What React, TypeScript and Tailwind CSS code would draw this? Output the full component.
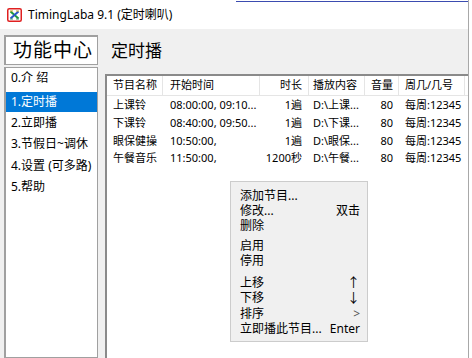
import React from 'react';

const menuItems = ['0.介 绍', '1.定时播', '2.立即播', '3.节假日~调休', '4.设置 (可多路)', '5.帮助'];

const rows = [
  { name: '上课铃', start: '08:00:00, 09:10...', len: '1遍', file: 'D:\\上课...', vol: '80', days: '每周:12345' },
  { name: '下课铃', start: '08:40:00, 09:50...', len: '1遍', file: 'D:\\下课...', vol: '80', days: '每周:12345' },
  { name: '眼保健操', start: '10:50:00,', len: '1遍', file: 'D:\\眼保...', vol: '80', days: '每周:12345' },
  { name: '午餐音乐', start: '11:50:00,', len: '1200秒', file: 'D:\\午餐...', vol: '80', days: '每周:12345' },
];

const AppIcon = () => (
  <svg width="15" height="14" viewBox="0 0 15 14">
    <rect x="0.75" y="0.75" width="13.5" height="12.5" rx="1.5" fill="white" stroke="#e02020" strokeWidth="1.5" />
    <path d="M3.5 3.5 L11.5 10.5" stroke="#1f9a3c" strokeWidth="2" />
    <path d="M11.5 3.5 L3.5 10.5" stroke="#2a58c8" strokeWidth="2" />
    <path d="M3 3 H6 M9 3 H12" stroke="#c8a020" strokeWidth="1.2" />
    <path d="M3 11 H6 M9 11 H12" stroke="#3a9a6a" strokeWidth="1.2" />
  </svg>
);

const ContextMenu = () => (
  <div className="absolute left-[230px] top-[181px] w-[138px] h-[161px] bg-[#f0f0f0] border border-[#cccccc] pt-[6.5px] pl-[9px] pr-[7px] text-[12px] leading-none text-black">
    <div className="h-[15px] flex items-center">添加节目...</div>
    <div className="h-[15px] flex items-center justify-between"><span>修改...</span><span>双击</span></div>
    <div className="h-[15px] flex items-center">删除</div>
    <div className="h-[5px]" />
    <div className="h-[15px] flex items-center">启用</div>
    <div className="h-[15px] flex items-center">停用</div>
    <div className="h-[6.5px]" />
    <div className="h-[15px] flex items-center justify-between"><span>上移</span><span className="text-[13px]">↑</span></div>
    <div className="h-[15px] flex items-center justify-between"><span>下移</span><span className="text-[13px]">↓</span></div>
    <div className="h-[1.5px]" />
    <div className="h-[15px] flex items-center justify-between"><span>排序</span><span className="text-[#555] text-[12px]">&gt;</span></div>
    <div className="h-[15px] flex items-center justify-between"><span>立即播此节目...</span><span>Enter</span></div>
  </div>
);

export default function App() {
  return (
    <div
      className="relative w-[472px] h-[358px] overflow-hidden bg-white flex"
      style={{ fontFamily: '"Noto Sans", "Noto Sans CJK SC", sans-serif' }}
    >
      <div className="w-[469px] h-full flex flex-col border-r border-[#a8a8a8]">
        {/* title bar */}
        <div className="h-[29px] bg-white flex flex-col">
          <div className="h-[2px] pt-[1px] pl-[236px]">
            <div className="h-[1px] bg-[#3b4cb0]" />
          </div>
          <div className="flex items-center pl-[7px] pt-[6px] gap-[6px]">
            <AppIcon />
            <span className="text-[12px] text-black leading-none">TimingLaba 9.1 (定时喇叭)</span>
          </div>
        </div>

        {/* body */}
        <div className="flex-1 bg-[#f0f0f0] flex pl-[4px] pt-[6px] min-h-0">
          {/* left column */}
          <div className="w-[94px] flex flex-col">
            <div className="h-[30px] bg-white border border-[#a0a0a0] border-t-2 border-l-2 flex items-center pl-[7px] text-[19px] tracking-[1px] leading-none text-black">
              功能中心
            </div>
            <div className="mt-[2px] flex-1 bg-white border border-[#a0a0a0] border-l-2 text-[12px] text-black">
              <div className="h-[20px] flex items-center pl-[5px]">{menuItems[0]}</div>
              <div className="h-[4px]" />
              <div className="h-[20px] flex items-center pl-[5px] bg-[#0078d7] text-white">{menuItems[1]}</div>
              {menuItems.slice(2).map((m) => (
                <div key={m} className="h-[21.5px] flex items-center pl-[5px]">{m}</div>
              ))}
            </div>
          </div>

          {/* right column */}
          <div className="flex-1 flex flex-col ml-[7px]">
            <div className="h-[30px] flex items-center pl-[6px] text-[17px] leading-none text-black">定时播</div>
            <div className="mt-[9px] flex-1 bg-white border-t-2 border-l-2 border-[#8a8a8a] text-[11px] text-black">
              <div className="h-[20px] flex border-b border-[#e5e5e5]">
                <div className="w-[56px] border-r border-[#e5e5e5] flex items-center pl-[6px]">节目名称</div>
                <div className="w-[97px] border-r border-[#e5e5e5] flex items-center pl-[7px]">开始时间</div>
                <div className="w-[49px] border-r border-[#e5e5e5] flex items-center justify-end pr-[6px]">时长</div>
                <div className="w-[56px] border-r border-[#e5e5e5] flex items-center pl-[4px]">播放内容</div>
                <div className="w-[34px] border-r border-[#e5e5e5] flex items-center justify-end pr-[5px]">音量</div>
                <div className="w-[66px] border-r border-[#e5e5e5] flex items-center pl-[6px]">周几/几号</div>
              </div>
              {rows.map((r) => (
                <div key={r.name} className="h-[17.7px] flex items-center whitespace-nowrap leading-none">
                  <div className="w-[56px] pl-[6px]">{r.name}</div>
                  <div className="w-[97px] pl-[7px]">{r.start}</div>
                  <div className="w-[49px] pr-[7px] text-right">{r.len}</div>
                  <div className="w-[56px] pl-[4px]">{r.file}</div>
                  <div className="w-[34px] pr-[6px] text-right">{r.vol}</div>
                  <div className="w-[66px] pl-[6px]">{r.days}</div>
                </div>
              ))}
            </div>
          </div>
        </div>
      </div>
      <ContextMenu />
    </div>
  );
}
